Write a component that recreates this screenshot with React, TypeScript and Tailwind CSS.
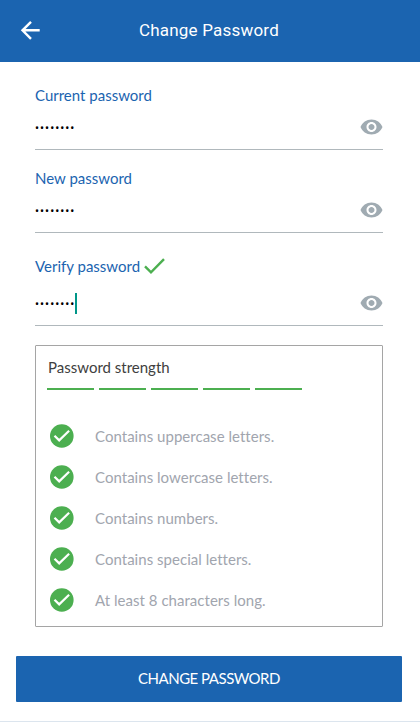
const EyeIcon = () => (
  <svg className="h-6 w-6 shrink-0 fill-[#a0abb2]" viewBox="-0.5 0 24 24">
    <path d="M12 4.5C7 4.5 2.73 7.61 1 12c1.73 4.39 6 7.5 11 7.5s9.27-3.11 11-7.5c-1.73-4.39-6-7.5-11-7.5zM12 17c-2.76 0-5-2.24-5-5s2.24-5 5-5 5 2.24 5 5-2.24 5-5 5zm0-8c-1.66 0-3 1.34-3 3s1.34 3 3 3 3-1.34 3-3-1.34-3-3-3z" />
  </svg>
);

const BadgeIcon = () => (
  <svg className="h-6 w-6 shrink-0" viewBox="0 0 24 24">
    <circle cx="11.8" cy="12" r="11.8" className="fill-[#4caf50]" />
    <path d="M4.5 11.7l4.7 4.7L19.1 6.8" fill="none" stroke="white" strokeWidth="2.2" />
  </svg>
);

type FieldProps = { label: string; verified?: boolean; className: string };

const Field = ({ label, verified, className }: FieldProps) => (
  <div className={className}>
    <div className="flex h-5 items-center text-[15px] text-[#1b64b0]">
      <span className="whitespace-nowrap">{label}</span>
      {verified && (
        <svg className="ml-1 h-4 w-[21px]" viewBox="0 0 21 16">
          <path d="M1 8.3l6 6L20 1.2" fill="none" stroke="#4caf50" strokeWidth="2.4" />
        </svg>
      )}
    </div>
    <div className={verified ? "flex h-[50px] items-center border-b border-[#b0b8bc] pt-[5px]" : "flex h-[45px] items-center border-b border-[#b0b8bc]"}>
      <span className="pt-0.5 font-['Roboto',sans-serif] text-[12px] tracking-[1px] text-black">••••••••</span>
      {verified && <span className="h-[21px] w-0.5 bg-[#009688]" />}
      <span className="ml-auto flex">
        <EyeIcon />
      </span>
    </div>
  </div>
);

const rules = [
  "Contains uppercase letters.",
  "Contains lowercase letters.",
  "Contains numbers.",
  "Contains special letters.",
  "At least 8 characters long.",
];

export default function App() {
  return (
    <div className="flex h-[722px] w-[420px] flex-col overflow-hidden border-b border-[#dce5ee] bg-white font-['Lato',sans-serif]">
      <header className="flex h-[62px] shrink-0 items-center bg-[#1b64b0] text-white">
        <svg className="mb-[3px] ml-5 h-5 w-5" viewBox="0 0 20 20" fill="none" stroke="white" strokeWidth="2.4">
          <path d="M19.7 10.3H2.5M11 1.8L2.5 10.3L11 18.8" />
        </svg>
        <h1 className="ml-[99px] font-['Roboto',sans-serif] text-[17px] tracking-[0.2px] whitespace-nowrap">Change Password</h1>
      </header>
      <main className="flex flex-col px-[35px] pr-[37px]">
        <Field label="Current password" className="mt-[23px]" />
        <Field label="New password" className="mt-[18px]" />
        <Field label="Verify password" verified className="mt-[23px]" />
        <section className="mt-[19px] h-[282px] rounded-[1px] border border-[#a5a5a5] pt-[11px] pl-[11px]">
          <h2 className="ml-px h-5 text-[15px] leading-5 text-[#404040]">Password strength</h2>
          <div className="mt-[11px] flex gap-[5px]">
            {rules.map((rule) => (
              <span key={rule} className="h-0.5 w-[47px] bg-[#4caf50]" />
            ))}
          </div>
          <ul className="mt-[34px] flex flex-col gap-[17px] pl-[3px]">
            {rules.map((rule) => (
              <li key={rule} className="flex h-6 items-center gap-[21px] text-[15px] text-[#a1a5ae]">
                <BadgeIcon />
                <span className="tracking-[0.03px]">{rule}</span>
              </li>
            ))}
          </ul>
        </section>
      </main>
      <button className="mt-[29px] ml-4 h-[46px] w-[386px] shrink-0 rounded-[1px] bg-[#1b64b0] pb-px text-[15px] tracking-[-0.5px] text-white">
        CHANGE PASSWORD
      </button>
    </div>
  );
}
